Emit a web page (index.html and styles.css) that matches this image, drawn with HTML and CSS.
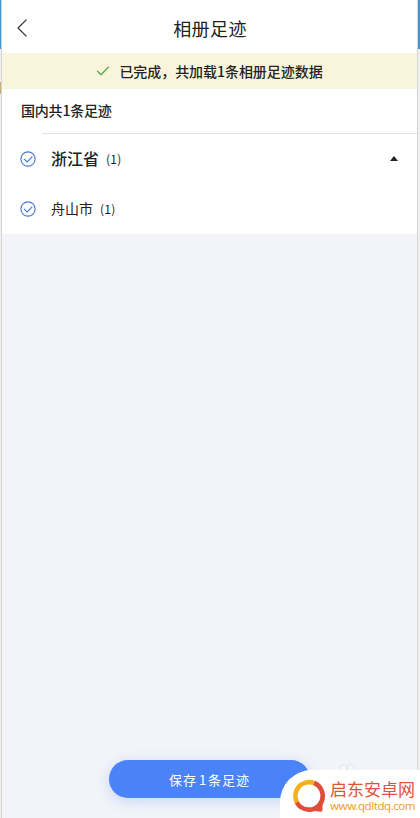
FILE: index.html
```html
<!DOCTYPE html>
<html lang="zh-CN">
<head>
  <meta charset="UTF-8">
  <meta name="viewport" content="width=device-width, initial-scale=1.0">
  <title>相册足迹</title>
  <link rel="stylesheet" href="styles.css">
</head>
<body>
  <div class="app">
    <header class="header">
      <svg class="back" width="12" height="20" viewBox="0 0 12 20"><path d="M10.5 1.7 2 10l8.5 8.3" fill="none" stroke="#222" stroke-width="1.1"/></svg>
      <h1>相册足迹</h1>
    </header>

    <div class="notice">
      <svg width="14" height="12" viewBox="0 0 14 12"><path d="M1.2 6.1 5 9.8l7.8-8" fill="none" stroke="#62a84c" stroke-width="1.4"/></svg>
      <span>已完成，共加载1条相册足迹数据</span>
    </div>

    <main class="list">
      <div class="summary"><span>国内共1条足迹</span></div>
      <div class="row province">
        <svg class="check" width="16" height="16" viewBox="0 0 16 16"><circle cx="8" cy="8" r="7.1"/><path d="m3.9 7.8 3.3 3.1 5.1-5.3"/></svg>
        <span class="name">浙江省</span>
        <span class="count">(1)</span>
        <span class="arrow"></span>
      </div>
      <div class="row city">
        <svg class="check" width="16" height="16" viewBox="0 0 16 16"><circle cx="8" cy="8" r="7.1"/><path d="m3.9 7.8 3.3 3.1 5.1-5.3"/></svg>
        <span class="name">舟山市</span>
        <span class="count">(1)</span>
      </div>
    </main>

    <footer class="footer">
      <button class="save">保存<span class="num">1</span>条足迹</button>
    </footer>
  </div>

  <svg class="paw" width="22" height="14" viewBox="0 0 22 14"><circle cx="6.5" cy="5" r="3.5"/><circle cx="14" cy="5" r="3.5"/></svg>

  <!-- site badge -->
  <div class="badge">
    <svg class="badge-logo" width="34" height="34" viewBox="0 0 34 34">
      <g fill="none" stroke-width="4.6">
        <path d="M5.6 24.5A13.8 13.8 0 0 1 22 4" stroke="#f6b01e"/>
        <path d="M22 4A13.8 13.8 0 1 1 4.8 23.5" stroke="#e24c3a"/>
      </g>
      <path d="M32.5 20c-2 4-2.2 7-2 11q0 2-2 1.8l-9-1 6-6z" fill="#e24c3a"/>
    </svg>
    <div class="badge-text">
      <div class="badge-name">启东安卓网</div>
      <div class="badge-url">www.qdltdq.com</div>
    </div>
  </div>
</body>
</html>
```

FILE: styles.css
```css
* {
  box-sizing: border-box;
}

body {
  margin: 0;
  height: 818px;
  overflow: hidden;
  position: relative;
  padding: 0 3px 0 2px;
  font-family: "Noto Sans CJK SC", sans-serif;
  color: #222;
  background:
    linear-gradient(#c9ad72, #c9ad72) 0 82px / 1px 12px no-repeat,
    linear-gradient(#4494cf 49px, #f0f0f0 49px);
}

.app {
  height: 818px;
  display: flex;
  flex-direction: column;
  background: #f3f4f9;
  box-shadow: 0 0 0 1px #d5d5d8;
}

.header {
  height: 53px;
  padding-top: 3px;
  display: flex;
  align-items: center;
  background: #fff;
}

.back {
  margin-left: 14px;
}

h1 {
  flex: 1;
  margin: 0 25px 0 0;
  font-size: 18px;
  font-weight: 400;
  line-height: 26px;
  letter-spacing: 0.4px;
  text-align: center;
}

.notice {
  height: 36px;
  display: flex;
  align-items: center;
  justify-content: center;
  gap: 10px;
  font-size: 14px;
  font-weight: 500;
  background: #f9f5dc;
}

.notice span {
  margin-left: -1px;
  letter-spacing: -0.05px;
}

.list {
  background: #fff;
}

.summary {
  height: 45px;
  padding-left: 19px;
  line-height: 43px;
  font-size: 14px;
  font-weight: 500;
  letter-spacing: -0.2px;
  background: linear-gradient(#e2e2e4, #e2e2e4) 40px 100% / 100% 1px no-repeat;
}

.row {
  height: 50px;
  padding: 0 19px 0 18px;
  display: flex;
  align-items: center;
}

.row span {
  margin-top: -2px;
}

.check {
  margin: -1px 15px 0 0;
  fill: none;
  stroke: #4777d5;
  stroke-width: 1.1;
}

.province .name {
  font-size: 16px;
  font-weight: 500;
}

.city .name {
  font-size: 14px;
}

.row .count {
  margin-left: 7px;
  font-size: 12px;
  letter-spacing: 0.3px;
}

.row .arrow {
  margin-left: auto;
  border: 4px solid transparent;
  border-top: 0;
  border-bottom: 5px solid #222;
}

.footer {
  margin-top: auto;
  padding-bottom: 20px;
  display: flex;
  justify-content: center;
}

.save {
  width: 201px;
  height: 38px;
  padding: 0;
  border: 0;
  border-radius: 19px;
  font-family: inherit;
  font-size: 13px;
  letter-spacing: 1px;
  color: #fff;
  background: #4a82f7;
  box-shadow: 0 3px 14px rgba(74, 130, 247, 0.28);
}

.num {
  margin: 0 1px 0 2px;
}

.paw {
  position: absolute;
  left: 337px;
  top: 763px;
  fill: #f6f7fa;
  stroke: #e3e4e9;
}

.badge {
  position: absolute;
  right: 0;
  bottom: 0;
  width: 140px;
  height: 48px;
  padding: 3px 0 0 12px;
  display: flex;
  align-items: center;
  gap: 4px;
  border-top-left-radius: 32px;
  background: #fff;
}

.badge-logo {
  flex: none;
}

.badge-name {
  font-size: 17px;
  line-height: 20px;
  color: #e2513c;
}

.badge-url {
  font-family: "Noto Sans", sans-serif;
  font-size: 11.5px;
  line-height: 14px;
  letter-spacing: -0.45px;
  color: #f0a02c;
}
```
